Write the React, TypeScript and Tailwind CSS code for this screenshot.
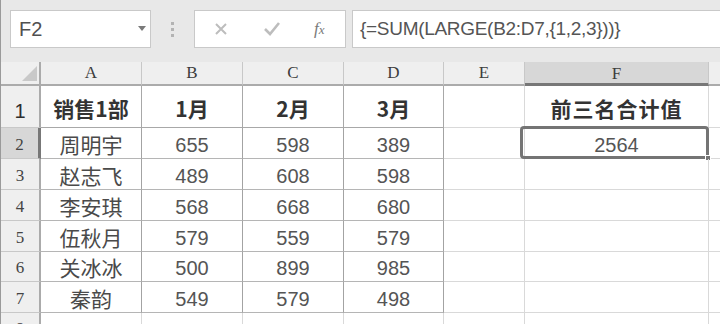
import React from "react";

const CJK = { fontFamily: '"Noto Sans CJK SC", "Noto Sans", sans-serif' };
const SANS = { fontFamily: '"Liberation Sans", Arial, "Noto Sans CJK SC", sans-serif' };
const SERIF = { fontFamily: '"Liberation Serif", "DejaVu Serif", serif' };

const colLetters = ["A", "B", "C", "D", "E", "F"];
const data: string[][] = [
  ["周明宇", "655", "598", "389"],
  ["赵志飞", "489", "608", "598"],
  ["李安琪", "568", "668", "680"],
  ["伍秋月", "579", "559", "579"],
  ["关冰冰", "500", "899", "985"],
  ["秦韵", "549", "579", "498"],
];

function Toolbar() {
  return (
    <div className="flex h-[62px] items-start bg-[#e8e8e8] pl-[9px] pt-[10px]">
      <div className="relative flex h-[38px] w-[141px] items-center border border-[#c9c9c9] bg-white pl-[8px]">
        <span className="text-[20px] text-[#505050]" style={SANS}>
          F2
        </span>
        <svg className="absolute left-[127px] top-[15px]" width="8" height="5" viewBox="0 0 8 5">
          <path d="M0 0 L8 0 L4 5 Z" fill="#7a7a7a" />
        </svg>
      </div>
      <div className="flex h-[38px] w-[43px] flex-col items-center justify-center gap-[3px]">
        <div className="h-[3px] w-[3px] bg-[#b3b3b3]" />
        <div className="h-[3px] w-[3px] bg-[#b3b3b3]" />
        <div className="h-[3px] w-[3px] bg-[#b3b3b3]" />
      </div>
      <div className="flex h-[38px] w-[152px] items-center border border-[#c9c9c9] bg-white">
        <svg className="ml-[19px]" width="14" height="14" viewBox="0 0 14 14">
          <path d="M2 2 L12 12 M12 2 L2 12" stroke="#bdbdbd" strokeWidth="2" />
        </svg>
        <svg className="ml-[36px]" width="16" height="14" viewBox="0 0 16 14">
          <path d="M1 7 L6 12 L15 1" stroke="#bdbdbd" strokeWidth="2.6" fill="none" />
        </svg>
        <span className="ml-[34px] text-[17px] italic text-[#7a7a7a]" style={SERIF}>
          f<span className="text-[13px]">x</span>
        </span>
      </div>
      <div className="ml-[6px] flex h-[38px] flex-1 items-center border border-r-0 border-[#c9c9c9] bg-white pl-[7px]">
        <span className="text-[19px] tracking-[-0.3px] text-[#555]" style={SANS}>
          {"{=SUM(LARGE(B2:D7,{1,2,3}))}"}
        </span>
      </div>
    </div>
  );
}

export default function App() {
  const hdrBg = "bg-[#efefef]";
  return (
    <div className="h-[324px] w-[720px] overflow-hidden border-l border-[#9a9a9a] bg-white">
      <Toolbar />
      <div className="grid grid-cols-[40px_101px_101px_101px_100px_81px_184px_11px] grid-rows-[24px_42px_31px_31px_31px_31px_30px_31px_20px]">
        {/* corner */}
        <div className={`relative border-b-2 border-r-2 border-[#ababab] ${hdrBg}`}>
          <svg className="absolute left-[21px] top-[4px]" width="15" height="15" viewBox="0 0 15 15">
            <path d="M15 0 L15 15 L0 15 Z" fill="#c9c9c9" />
          </svg>
        </div>
        {colLetters.map((c) => (
          <div
            key={c}
            className={`flex items-center justify-center text-[17px] ${
              c === "F"
                ? "border-b-[3px] border-r border-b-[#777] border-r-[#c8c8c8] bg-[#d7d7d7] pt-[2px]"
                : `border-b-2 border-r border-b-[#ababab] border-r-[#c8c8c8] ${hdrBg}`
            } text-[#3c3c3c]`}
            style={SERIF}
          >
            {c}
          </div>
        ))}
        <div className={`border-b-2 border-[#ababab] ${hdrBg}`} />

        {/* row 1 */}
        <div
          className={`flex items-end justify-center border-b border-r-2 border-b-[#c8c8c8] border-r-[#ababab] pb-[1px] text-[20px] text-[#2e2e2e] ${hdrBg}`}
          style={SANS}
        >
          1
        </div>
        {["销售1部", "1月", "2月", "3月"].map((t, i) => (
          <div
            key={i}
            className="flex items-center justify-center border-b border-r border-[#a8a8a8] pt-[4px] text-[21px] font-bold text-[#333]"
            style={CJK}
          >
            {t}
          </div>
        ))}
        <div className="border-b border-r border-[#d9d9d9]" />
        <div
          className="flex items-center justify-center border-b border-r border-[#d9d9d9] pt-[4px] text-[21px] font-bold tracking-[1px] text-[#333]"
          style={CJK}
        >
          前三名合计值
        </div>
        <div className="border-b border-[#d9d9d9]" />

        {/* rows 2-7 */}
        {data.map((r, ri) => {
          const rowNum = ri + 2;
          const sel = rowNum === 2;
          return (
            <React.Fragment key={ri}>
              <div
                className={`flex items-center justify-center border-b pt-[3px] text-[17px] text-[#444] ${
                  sel
                    ? "border-r-[3px] border-b-[#c8c8c8] border-r-[#777] bg-[#d7d7d7]"
                    : `border-r-2 border-b-[#c8c8c8] border-r-[#ababab] ${hdrBg}`
                }`}
                style={SERIF}
              >
                {rowNum}
              </div>
              {r.map((t, i) => (
                <div
                  key={i}
                  className={`flex items-center justify-center border-b border-r pt-[3px] ${
                    i === 0 ? "text-[21px] text-[#4a4a4a]" : "text-[20px] text-[#555]"
                  } border-b-[#b5b5b5] border-r-[#a3a3a3]`}
                  style={i === 0 ? CJK : SANS}
                >
                  {t}
                </div>
              ))}
              <div className="border-b border-r border-[#d9d9d9]" />
              <div
                className="relative flex items-center justify-center border-b border-r border-[#d9d9d9] pt-[3px] text-[20px] text-[#555]"
                style={SANS}
              >
                {sel && (
                  <>
                    <div className="absolute -left-[5px] -top-[2px] h-[33px] w-[189px] rounded-[4px] border-[3px] border-[#747474]" />
                    <div className="absolute -bottom-[3px] -right-[3px] h-[6px] w-[6px] border border-white bg-[#747474]" />
                  </>
                )}
                <span className="relative">{sel ? "2564" : ""}</span>
              </div>
              <div className="border-b border-[#d9d9d9]" />
            </React.Fragment>
          );
        })}

        {/* row 8 */}
        <div
          className={`flex items-start justify-center overflow-hidden border-r-2 border-[#ababab] pt-[6px] text-[17px] leading-[20px] text-[#444] ${hdrBg}`}
          style={SERIF}
        >
          8
        </div>
        {[0, 1, 2, 3, 4, 5].map((i) => (
          <div key={i} className="border-r border-[#d9d9d9]" />
        ))}
        <div />
      </div>
    </div>
  );
}
